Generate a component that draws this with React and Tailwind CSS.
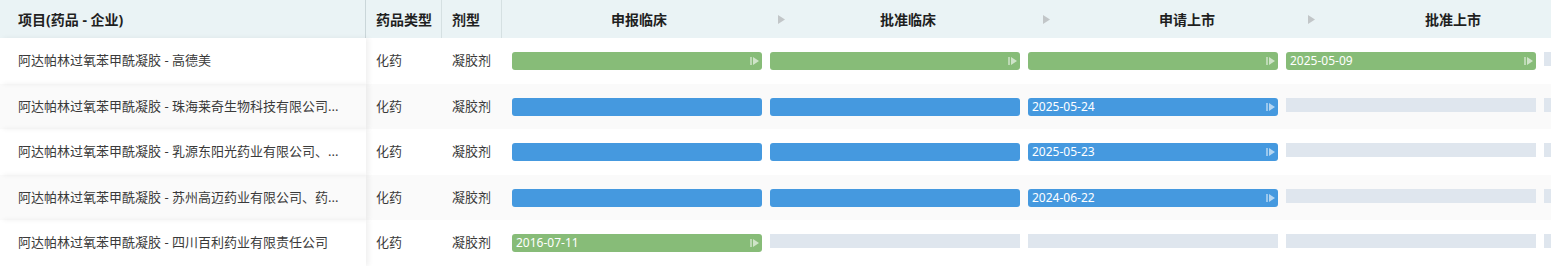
const stages = [
  { label: "申报临床", cell: "w-[274px]", pad: "", arrow: false },
  { label: "批准临床", cell: "w-[265px]", pad: "pr-[10px]", arrow: true },
  { label: "申请上市", cell: "w-[265px]", pad: "pl-[18px]", arrow: true },
  { label: "批准上市", cell: "w-[265px]", pad: "pl-[20px]", arrow: true },
];

// g = green done, b = blue done, e = empty
const rows = [
  { name: "阿达帕林过氧苯甲酰凝胶 - 高德美", bars: [["g"], ["g"], ["g"], ["g", "2025-05-09"], ["e"]] },
  { name: "阿达帕林过氧苯甲酰凝胶 - 珠海莱奇生物科技有限公司...", bars: [["b"], ["b"], ["b", "2025-05-24"], ["e"], ["e"]] },
  { name: "阿达帕林过氧苯甲酰凝胶 - 乳源东阳光药业有限公司、...", bars: [["b"], ["b"], ["b", "2025-05-23"], ["e"], ["e"]] },
  { name: "阿达帕林过氧苯甲酰凝胶 - 苏州高迈药业有限公司、药...", bars: [["b"], ["b"], ["b", "2024-06-22"], ["e"], ["e"]] },
  { name: "阿达帕林过氧苯甲酰凝胶 - 四川百利药业有限责任公司", bars: [["g", "2016-07-11"], ["e"], ["e"], ["e"], ["e"]] },
];

function HeadArrow() {
  return (
    <svg width="7" height="9" viewBox="0 0 7 9" className="ml-[2px] shrink-0">
      <polygon points="0,0 7,4.5 0,9" fill="#c2c6c8" />
    </svg>
  );
}

function BarEnd() {
  return (
    <svg width="9" height="10" viewBox="0 0 9 10" className="ml-auto mr-[3px] shrink-0">
      <rect x="0" y="1" width="2" height="8" fill="rgba(255,255,255,0.45)" />
      <polygon points="3,1 9,5 3,9" fill="rgba(255,255,255,0.6)" />
    </svg>
  );
}

function Bar({ kind, date }) {
  if (kind === "e") return <div className="h-[14px] w-[250px] shrink-0 bg-[#dfe6ee]" />;
  const color = kind === "g" ? "bg-[#87bc78]" : "bg-[#4599df]";
  const showEnd = kind === "g" || date;
  return (
    <div className={`flex h-[18px] w-[250px] shrink-0 items-center rounded-[3px] ${color}`}>
      {date ? <span className="pl-[4px] text-[12px] leading-none text-white">{date}</span> : null}
      {showEnd ? <BarEnd /> : null}
    </div>
  );
}

export default function App() {
  return (
    <div className="h-[266px] w-[1551px] overflow-hidden bg-white font-['Noto_Sans','Noto_Sans_CJK_SC',sans-serif]">
      <div className="flex h-[38px] bg-[#eaf3f5] text-[14px] font-bold text-[#1f1f1f]">
        <div className="flex w-[366px] shrink-0 items-center rounded-bl-[4px] border-r border-[#cad6d9] pl-[18px]">项目(药品 - 企业)</div>
        <div className="flex w-[76px] shrink-0 items-center border-r border-[#d5e0e2] pl-[10px]">药品类型</div>
        <div className="flex w-[60px] shrink-0 items-center border-r border-[#d5e0e2] pl-[10px]">剂型</div>
        <div className="flex min-w-0 flex-1">
          {stages.map((s) => (
            <div key={s.label} className={`flex shrink-0 items-center ${s.cell}`}>
              {s.arrow ? <HeadArrow /> : null}
              <span className={`flex-1 text-center ${s.pad}`}>{s.label}</span>
            </div>
          ))}
        </div>
      </div>

      {rows.map((r, i) => (
        <div key={i} className={`flex h-[45.5px] text-[13px] text-[#3a3a3a] ${i % 2 === 1 ? "bg-[#fafafa]" : "bg-white"}`}>
          <div className="relative z-10 flex w-[366px] shrink-0 items-center whitespace-nowrap pl-[18px] shadow-[3px_0_5px_rgba(0,0,0,0.06)]">
            {r.name}
          </div>
          <div className="flex w-[76px] shrink-0 items-center pl-[10px]">化药</div>
          <div className="flex w-[60px] shrink-0 items-center pl-[10px]">凝胶剂</div>
          <div className="flex min-w-0 flex-1 items-start gap-[8px] overflow-hidden pl-[10px] pt-[14px]">
            {r.bars.map((b, j) => (
              <Bar key={j} kind={b[0]} date={b[1]} />
            ))}
          </div>
        </div>
      ))}
    </div>
  );
}
